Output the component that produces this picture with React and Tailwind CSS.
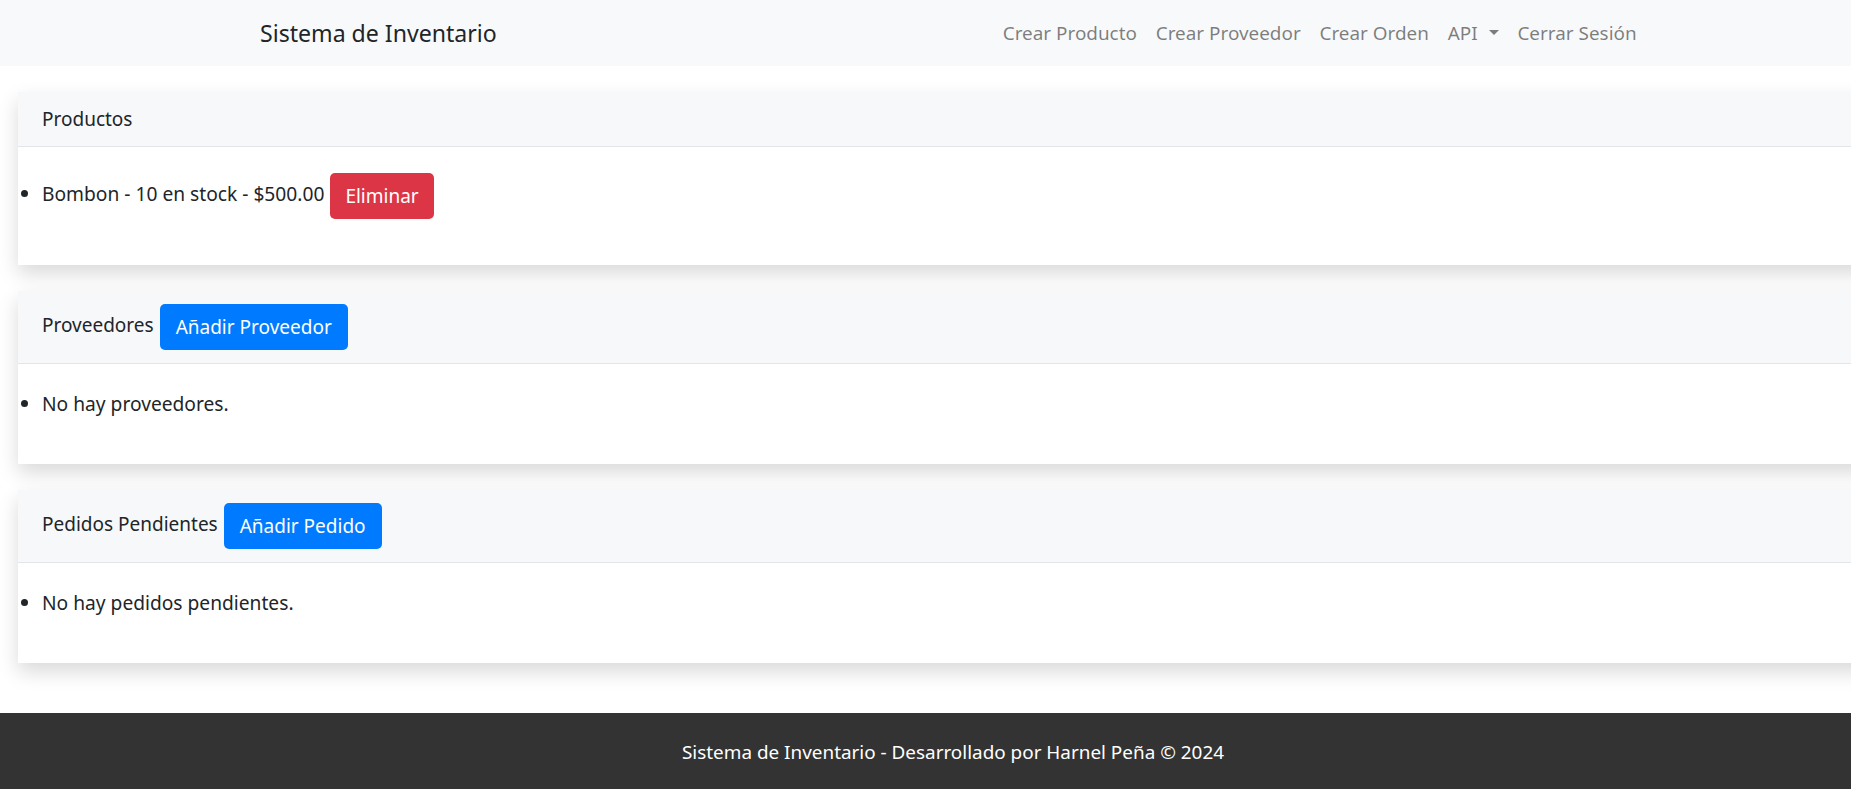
const font = { fontFamily: '"Noto Sans", "Open Sans", Arial, sans-serif' };

const NAV_LINKS = ["Crear Producto", "Crear Proveedor", "Crear Orden"];

function Card({ title, action, children }) {
  return (
    <section className="bg-white shadow-[0_9px_19px_rgba(0,0,0,0.15)]">
      <div className="border-b border-[#e3e5e8] bg-[#f7f8f9] px-[24px] py-[13px] text-[19px] leading-[28px] text-[#212529]">
        {title}
        {action && (
          <button className="ml-[6px] inline-flex h-[46px] items-center rounded-[5px] bg-[#007bff] px-[16px] align-middle text-[19px] text-white">
            {action}
          </button>
        )}
      </div>
      <div className="px-[24px] pb-[27px] pt-[26px]">
        <ul className="mb-[19px] list-disc pl-0 text-[19.2px] leading-[28px] text-[#212529]">{children}</ul>
      </div>
    </section>
  );
}

export default function App() {
  return (
    <div className="w-full overflow-hidden bg-white" style={font}>
      <div className="w-[1906px]">
        <nav className="h-[66px] bg-[#f8f9fa]">
          <div className="mx-auto flex h-full w-[1422px] items-center justify-between px-[18px]">
            <a className="text-[23.1px] text-[#212529]">Sistema de Inventario</a>
            <div className="flex items-center text-[18.9px] text-black/50">
              {NAV_LINKS.map((l) => (
                <a key={l} className="px-[9.4px]">
                  {l}
                </a>
              ))}
              <a className="flex items-center px-[9.4px]">
                API
                <span className="ml-[11px] h-0 w-0 border-x-[5.7px] border-t-[5.7px] border-x-transparent border-t-black/50" />
              </a>
              <a className="px-[9.4px]">Cerrar Sesión</a>
            </div>
          </div>
        </nav>

        <main className="flex flex-col gap-[26px] px-[18px] pb-[50px] pt-[26px]">
          <Card title="Productos">
            <li>
              Bombon - 10 en stock - $500.00
              <button className="ml-[6px] inline-flex h-[46px] items-center rounded-[5px] bg-[#dc3545] px-[15px] align-middle text-[19px] text-white">
                Eliminar
              </button>
            </li>
          </Card>
          <Card title="Proveedores" action="Añadir Proveedor">
            <li>No hay proveedores.</li>
          </Card>
          <Card title="Pedidos Pendientes" action="Añadir Pedido">
            <li>No hay pedidos pendientes.</li>
          </Card>
        </main>

        <footer className="flex h-[78px] items-center justify-center bg-[#333333] text-[18.9px] text-white">
          Sistema de Inventario - Desarrollado por Harnel Peña © 2024
        </footer>
      </div>
    </div>
  );
}
